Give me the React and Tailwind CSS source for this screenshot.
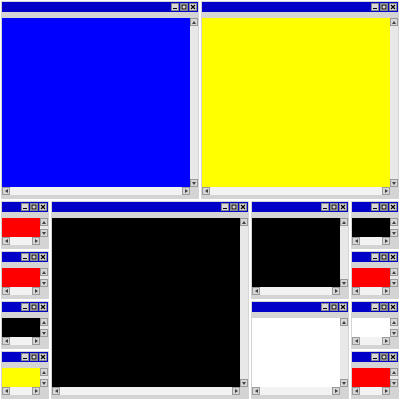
import React from "react";

// Tiny retro window: blue title bar, coloured client area and two scrollbars.
function TitleBtn({ kind }) {
  return (
    <div className="flex h-[8px] w-[8px] items-center justify-center border border-[#888888] bg-[#d6d6d6]">
      <svg width="6" height="6" viewBox="0 0 6 6">
        {kind === "min" && <rect x="1" y="4" width="4" height="1" fill="#000" />}
        {kind === "max" && <rect x="1" y="1" width="4" height="4" fill="none" stroke="#000" strokeWidth="1" />}
        {kind === "close" && <path d="M1 1L5 5M5 1L1 5" stroke="#000" strokeWidth="1.2" />}
      </svg>
    </div>
  );
}

function Arrow({ dir }) {
  const d = {
    up: "M1 5L3 2L5 5Z",
    down: "M1 2L3 5L5 2Z",
    left: "M5 1L2 3L5 5Z",
    right: "M2 1L5 3L2 5Z",
  }[dir];
  return (
    <div className="flex h-[8px] w-[8px] shrink-0 items-center justify-center border border-[#9a9a9a] bg-[#d6d6d6]">
      <svg width="6" height="6" viewBox="0 0 6 6">
        <path d={d} fill="#404040" />
      </svg>
    </div>
  );
}

function Win({ fill }) {
  return (
    <div className="flex h-full w-full p-px">
      <div className="flex min-h-0 flex-1 flex-col bg-[#d4d4d4] px-px pb-[4px] pt-px">
        <div className="flex h-[10px] shrink-0 items-center justify-end gap-px bg-[#0000c8] pr-px">
          <TitleBtn kind="min" />
          <TitleBtn kind="max" />
          <TitleBtn kind="close" />
        </div>
        <div className="h-[6px] shrink-0" />
        <div className="flex min-h-0 flex-1 flex-col">
          <div className="flex min-h-0 flex-1">
            <div className={`flex-1 ${fill}`} />
            <div className="flex w-[8px] flex-col justify-between bg-[#e8e8e8]">
              <Arrow dir="up" />
              <Arrow dir="down" />
            </div>
          </div>
          <div className="flex h-[8px] shrink-0">
            <div className="flex flex-1 justify-between bg-[#f2f2f2]">
              <Arrow dir="left" />
              <Arrow dir="right" />
            </div>
            <div className="w-[8px] bg-[#d4d4d4]" />
          </div>
        </div>
      </div>
    </div>
  );
}

function Stack({ fills }) {
  return (
    <div className="flex w-[50px] flex-col">
      {fills.map((f, i) => (
        <div key={i} className="h-[50px]">
          <Win fill={f} />
        </div>
      ))}
    </div>
  );
}

export default function App() {
  return (
    <div className="flex h-[400px] w-[400px] flex-col bg-white">
      <div className="flex h-[200px]">
        <div className="w-[200px]">
          <Win fill="bg-[#0000ff]" />
        </div>
        <div className="w-[200px]">
          <Win fill="bg-[#ffff00]" />
        </div>
      </div>
      <div className="flex h-[200px]">
        <Stack fills={["bg-[#ff0000]", "bg-[#ff0000]", "bg-black", "bg-[#ffff00]"]} />
        <div className="w-[200px]">
          <Win fill="bg-black" />
        </div>
        <div className="flex w-[100px] flex-col">
          <div className="h-[100px]">
            <Win fill="bg-black" />
          </div>
          <div className="h-[100px]">
            <Win fill="bg-white" />
          </div>
        </div>
        <Stack fills={["bg-black", "bg-[#ff0000]", "bg-white", "bg-[#ff0000]"]} />
      </div>
    </div>
  );
}
